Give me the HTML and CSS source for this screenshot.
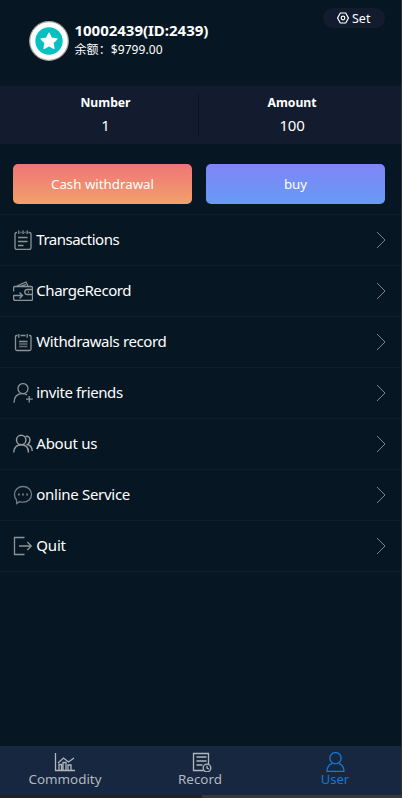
FILE: index.html
```html
<!DOCTYPE html>
<html lang="en">
<head>
<meta charset="utf-8">
<title>User</title>
<link rel="stylesheet" href="styles.css">
</head>
<body>
<div class="app">
  <header class="profile">
    <svg class="avatar" viewBox="0 0 40 40"><circle cx="20" cy="20" r="19.3" fill="#fff" stroke="#a8a5a2" stroke-width="1.2"/><circle cx="20" cy="20" r="13.7" fill="#08bfc1"/><path d="M20 12.2l2.4 4.900 5.500.8-4 3.900 1 5.500-4.900-2.600-4.900 2.600 1-5.500-4-3.900 5.500-.8z" fill="#fff" stroke="#fff" stroke-width="1.4" stroke-linejoin="round"/></svg>
    <div class="identity">
      <div class="name">10002439(ID:2439)</div>
      <div class="balance">余额：<span>$9799.00</span></div>
    </div>
    <div class="set"><svg viewBox="0 0 12 12"><path d="M3.300 1h5.400l2.700 5-2.700 5H3.300L.6 6z"/><circle cx="6" cy="6" r="1.800"/></svg><span>Set</span></div>
  </header>
  <section class="stats">
    <div class="stat"><b>Number</b><span>1</span></div>
    <div class="stat"><b>Amount</b><span>100</span></div>
  </section>
  <div class="actions">
    <div class="btn withdraw">Cash withdrawal</div>
    <div class="btn buy">buy</div>
  </div>
  <nav class="menu">
    <div class="row"><svg class="icon" viewBox="0 0 20 20"><path d="M4 2.500H3.500q-1.500 0-1.500 1.500v13.500q0 2 2 2h12q2 0 2-2V4q0-1.500-1.500-1.500h-1M7.500 2.500h1M11.500 2.500h1M5.800.5v3.500M10 .5v3.500M14.200.5v3.500M5 7.500h9.500M5 11.500h9.500M5 15.500h5.500"/></svg><span class="t1">Transactions</span><svg class="chev" viewBox="0 0 10 18"><path d="M1 1l8 8-8 8"/></svg></div>
    <div class="row"><svg class="icon" viewBox="0 0 20 20"><path d="M.6 10.500V7q0-1.500 1-1.500h16.400q1.500 0 1.500 1.500v2M.6 14v3.500q0 2 2 2h15.400q1.500 0 1.500-1.500V14M19.500 8.500h-5q-2.700 0-2.700 2.500t2.700 2.500h5zM.6 14.500h8.500M6.500 11.500l3 3-3 3M4 5l9-4 2 4M8 3l5.500-2M8 5l5-1.500M15 11h1"/></svg><span class="t2">ChargeRecord</span><svg class="chev" viewBox="0 0 10 18"><path d="M1 1l8 8-8 8"/></svg></div>
    <div class="row"><svg class="icon" viewBox="0 0 20 20"><path d="M4.500 3.500h-1q-1 0-1 1v12.500q0 1.500 1.500 1.500h12.500q1.500 0 1.500-1.500V4.500q0-1-1-1h-1M7.500 3.500h5M5.800 2v3.800M14.200 2v3.800M6 9.500h8.500"/><path class="faint" d="M6 12h8.500M6 14.500h8.500"/></svg><span class="t3">Withdrawals record</span><svg class="chev" viewBox="0 0 10 18"><path d="M1 1l8 8-8 8"/></svg></div>
    <div class="row"><svg class="icon" viewBox="0 0 20 20"><circle cx="10" cy="5.600" r="5"/><path d="M1 19.700c0-6 3-9 8.500-9 2.300 0 3.500.5 4.500 1.300M16.200 13v6.500M13 16.200h6.700"/></svg><span class="t4">invite friends</span><svg class="chev" viewBox="0 0 10 18"><path d="M1 1l8 8-8 8"/></svg></div>
    <div class="row"><svg class="icon bold" viewBox="0 0 20 20"><circle cx="8.200" cy="6" r="4.700"/><path d="M.8 18.500c0-5 3-7.800 7.400-7.800s7.300 2.800 7.300 7.800M12.500 2.500c2.500-.8 4.500 1 4.500 3.500 0 2-1 3.500-2.500 4.500 3 .8 4.700 3 4.700 6.500"/></svg><span class="t5">About us</span><svg class="chev" viewBox="0 0 10 18"><path d="M1 1l8 8-8 8"/></svg></div>
    <div class="row"><svg class="icon dim" viewBox="0 0 20 20"><path d="M3.500 15A7.800 7.800 0 0 1 1.500 9.500c0-4.700 3.700-8 8.500-8s8.500 3.300 8.500 8-3.700 7.700-8.500 7.700q-2 0-3.500-.6l-2.800 1.900z"/><path class="dots" d="M5 9.500h1.800M9.100 9.500h1.800M13.200 9.500H15"/></svg><span class="t6">online Service</span><svg class="chev" viewBox="0 0 10 18"><path d="M1 1l8 8-8 8"/></svg></div>
    <div class="row"><svg class="icon" viewBox="0 0 20 20"><path d="M11.500 1.500h-10v17h10M6 10h12M14.300 6l4 4-4 4"/></svg><span class="t7">Quit</span><svg class="chev" viewBox="0 0 10 18"><path d="M1 1l8 8-8 8"/></svg></div>
  </nav>
  <footer class="tabs">
    <div class="tab"><svg viewBox="0 0 21 20"><path d="M1.500 1v17.500H21M5 18v-5.500h2.500V18M9 18v-7.500h3V18M14 18v-5h3v5M4 11l5.500-5 5 4L20 6"/></svg><span>Commodity</span></div>
    <div class="tab"><svg viewBox="0 0 21 20"><path d="M17.500 12V1.500h-15v17h10M5.500 5h10M5.500 9h10M5.500 13h6"/><circle cx="16" cy="16" r="3.800"/><path d="M16 13.800V16l2 1"/></svg><span>Record</span></div>
    <div class="tab active"><svg viewBox="0 0 21 20"><circle cx="10.500" cy="6.200" r="5.600"/><path d="M7.500 11.300C4 12.500 2 15.500 2 19.300h17c0-3.800-2-6.800-5.500-8"/></svg><span>User</span></div>
  </footer>
</div>
<div class="scrollbar"></div>
</body>
</html>
```
FILE: styles.css
```css
* { box-sizing: border-box; }
body {
  margin: 0;
  width: 402px;
  height: 798px;
  overflow: hidden;
  background: #303236;
  color: #fff;
  font-family: "Noto Sans", "Noto Sans CJK SC", sans-serif;
}
svg { fill: none; stroke: currentColor; flex: none; }
span, b, .name, .balance { white-space: nowrap; }
.app {
  width: 401px;
  height: 795px;
  display: flex;
  flex-direction: column;
  background: #061723;
}
.profile { height: 86px; display: flex; padding: 21px 16px 0 29px; }
.avatar { width: 40px; height: 40px; stroke: none; }
.identity { margin-left: 5.5px; flex: 1; }
.name { font-size: 15px; font-weight: 700; line-height: 19px; letter-spacing: -0.02px; }
.balance { font-size: 12px; line-height: 20px; letter-spacing: 0.08px; }
.set {
  width: 62px;
  height: 20px;
  margin-top: -13px;
  border-radius: 10px;
  background: #131c2e;
  display: flex;
  align-items: center;
  padding-left: 14px;
  gap: 3px;
  font-size: 12.5px;
}
.set svg { width: 12px; height: 12px; stroke-width: 1.2; }
.stats { height: 58px; background: #131c2e; display: flex; padding: 8px 0 7px; }
.stat { width: 198px; display: flex; flex-direction: column; align-items: center; padding-left: 13px; }
.stat + .stat { width: 203px; border-left: 1px solid #081421; padding: 0 16px 0 0; }
.stat b { font-size: 12.2px; line-height: 17px; }
.stat span { font-size: 15px; line-height: 29px; letter-spacing: -0.3px; }
.actions { display: flex; gap: 14px; padding: 20px 16px 10px 13px; }
.btn {
  flex: 1;
  height: 40px;
  border-radius: 5px;
  text-align: center;
  font-size: 13.3px;
  line-height: 40px;
}
.withdraw { background: linear-gradient(#ef7478, #f2a169); }
.buy { background: linear-gradient(#8085f6, #669af5); }
.menu { border-top: 1px solid #101e2c; }
.row {
  height: 51px;
  display: flex;
  align-items: center;
  padding: 0 15px 0 13px;
  border-bottom: 1px solid #101e2c;
  font-size: 15px;
}
.row span { flex: 1; margin-left: 3.3px; line-height: 20px; padding-bottom: 2px; }
.t1 { letter-spacing: -0.5px; }
.t2 { letter-spacing: -0.45px; }
.t3 { letter-spacing: -0.38px; }
.t4 { letter-spacing: -0.38px; }
.t5 { letter-spacing: -0.25px; }
.t6 { letter-spacing: -0.29px; }
.t7 { letter-spacing: -0.2px; }
.icon { width: 20px; height: 20px; color: #8c9295; stroke-width: 1.3; }
.faint { opacity: 0.7; }
.dim { color: #747b80; }
.bold { color: #999da0; stroke-width: 1.45; }
.dots { stroke-width: 1.8; }
.chev { width: 10px; height: 18px; color: #7c8489; }
.tabs { height: 49px; margin-top: auto; background: #17273f; display: flex; color: #b0b7c0; }
.tab {
  flex: 1;
  display: flex;
  flex-direction: column;
  align-items: center;
  padding: 6px 5px 0 0;
  font-size: 13.4px;
  line-height: 16px;
}
.tab:first-child svg { margin-right: 1px; }
.tab:last-child { padding-right: 1px; }
.tab:nth-child(2) svg { margin-left: 2px; }
.tab svg { width: 21px; height: 20px; stroke-width: 1.3; margin-bottom: -1px; }
.tab.active { color: #1878d4; font-size: 13px; }
.scrollbar { height: 3px; background: linear-gradient(90deg, #202225 202px, #3b3639 202px); }
```
